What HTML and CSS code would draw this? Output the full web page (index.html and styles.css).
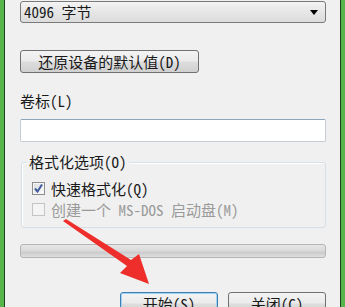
FILE: index.html
```html
<!DOCTYPE html>
<html>
<head>
<meta charset="utf-8">
<link rel="stylesheet" href="styles.css">
</head>
<body>
<div class="frame">
  <div class="edge edge-l"></div>
  <div class="content">
    <div class="combo"><span class="combo-text">4096 字节</span><span class="combo-arrow"></span></div>
    <button class="btn btn-restore">还原设备的默认值(D)</button>
    <div class="label">卷标(L)</div>
    <div class="textbox"></div>
    <div class="group">
      <span class="group-title">格式化选项(O)</span>
      <div class="check-row">
        <span class="check checked"><svg width="11" height="11" viewBox="0 0 11 11"><path d="M2 5.5 L4.5 8.5 L9 1.5" fill="none" stroke="#3d5a9c" stroke-width="2"/></svg></span>
        <span class="check-text">快速格式化(Q)</span>
      </div>
      <div class="check-row disabled">
        <span class="check"></span>
        <span class="check-text">创建一个 MS-DOS 启动盘(M)</span>
      </div>
    </div>
    <div class="progress"></div>
    <div class="actions">
      <button class="btn btn-action btn-default">开始(S)</button>
      <button class="btn btn-action">关闭(C)</button>
    </div>
  </div>
  <div class="edge edge-r"></div>
  <svg class="arrow" width="345" height="307" viewBox="0 0 345 307">
    <polygon points="63,221 66,219 131,260 139,254 149,284 120,273 127,266" fill="#ee2e2a"/>
  </svg>
</div>
</body>
</html>
```
FILE: styles.css
```css
html, body {
  margin: 0;
  padding: 0;
  background: #f0f0f0;
}
.frame {
  position: relative;
  width: 345px;
  height: 307px;
  overflow: hidden;
  display: flex;
  font-family: "Noto Sans Mono CJK SC", "Noto Sans CJK SC", monospace;
  font-size: 15px;
  color: #1a1a1a;
}
.edge {
  width: 4px;
  background: #58b54c;
  flex: none;
}
.edge-l { border-right: 1px solid #1d3f1d; }
.edge-r { border-left: 1px solid #1d3f1d; }
.content {
  flex: 1;
  padding: 1px 14px 0 15px;
  display: flex;
  flex-direction: column;
  align-items: stretch;
}
.content > * {
  flex-shrink: 0;
}
.combo {
  box-sizing: border-box;
  height: 22px;
  border: 1px solid #7a7a7a;
  border-radius: 3px;
  background: linear-gradient(#f4f4f4, #e6e6e6 50%, #dcdcdc);
  display: flex;
  align-items: center;
  justify-content: space-between;
  padding: 0 7px 0 3px;
  line-height: 20px;
}
.combo-arrow {
  width: 0;
  height: 0;
  border-left: 4px solid transparent;
  border-right: 4px solid transparent;
  border-top: 5px solid #000;
}
.btn {
  box-sizing: border-box;
  font: inherit;
  color: #1a1a1a;
  border: 1px solid #707070;
  border-radius: 3px;
  background: linear-gradient(#f3f3f3, #ebebeb 48%, #dddddd 52%, #d0d0d0);
  height: 23px;
  padding: 0;
  line-height: 21px;
}
.btn-restore {
  margin-top: 27px;
  width: 179px;
  align-self: flex-start;
}
.label {
  margin-top: 19px;
  line-height: 18px;
  height: 18px;
}
.textbox {
  box-sizing: border-box;
  margin-top: 9px;
  height: 23px;
  background: #fff;
  border: 1px solid #c5ccd4;
  border-top-color: #8ea4be;
  border-radius: 2px;
}
.group {
  position: relative;
  box-sizing: border-box;
  margin: 20px 0 0 1px;
  height: 66px;
  padding: 15px 0 0 10px;
  border: 1px solid #d5dfe5;
  border-radius: 3px;
  box-shadow: inset 1px 1px 0 #fff;
}
.group-title {
  position: absolute;
  left: 5px;
  top: -9px;
  padding: 0 2px;
  line-height: 16px;
  background: #f0f0f0;
}
.check-row {
  display: flex;
  align-items: center;
  height: 21px;
  gap: 6px;
}
.check {
  width: 11px;
  height: 11px;
  border: 1px solid #8f8f8f;
  background: linear-gradient(135deg, #dcdcdc, #fdfdfd);
  box-shadow: inset 0 0 0 1px #f4f4f4;
  display: flex;
}
.disabled .check {
  border-color: #c4c4c4;
  background: #f4f4f4;
}
.disabled .check-text { color: #9a9a9a; }
.progress {
  box-sizing: border-box;
  margin-top: 16px;
  height: 14px;
  border: 1px solid #b5b5b5;
  border-radius: 3px;
  background: linear-gradient(#e6e6e6, #d9d9d9 50%, #cbcbcb 60%, #dedede);
}
.actions {
  margin-top: 34px;
  display: flex;
  justify-content: flex-end;
  gap: 10px;
}
.btn-action {
  width: 98px;
}
.btn-default {
  border-color: #3c7fb1;
  box-shadow: inset 0 0 0 1px #9ed1f5;
}
.arrow {
  position: absolute;
  left: 0;
  top: 0;
  pointer-events: none;
}
```
